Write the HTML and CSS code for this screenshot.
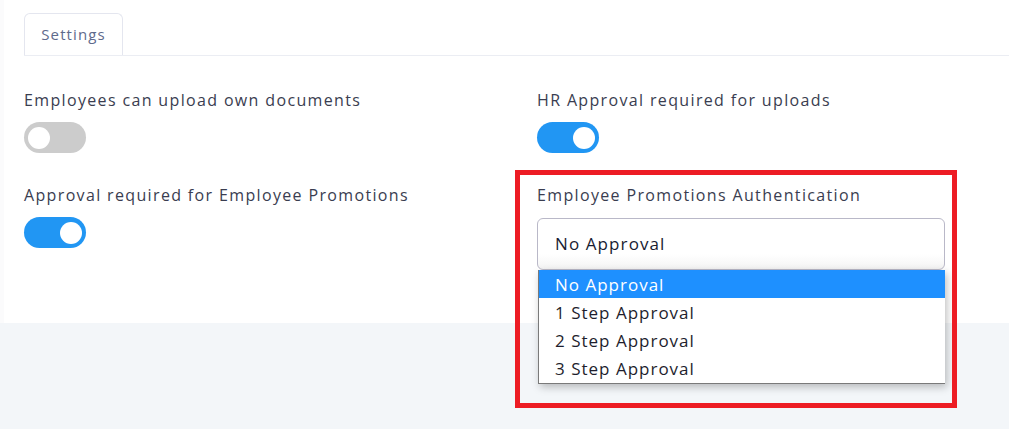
FILE: index.html
```html
<!DOCTYPE html>
<html>
<head>
<meta charset="utf-8">
<link rel="stylesheet" href="styles.css">
</head>
<body>
<div class="card">
  <div class="tabs">
    <div class="tab">Settings</div>
  </div>
  <div class="grid">
    <div class="field">
      <div class="label">Employees can upload own documents</div>
      <div class="toggle"><span class="knob"></span></div>
    </div>
    <div class="field">
      <div class="label">HR Approval required for uploads</div>
      <div class="toggle on"><span class="knob"></span></div>
    </div>
    <div class="field">
      <div class="label">Approval required for Employee Promotions</div>
      <div class="toggle on"><span class="knob"></span></div>
    </div>
    <div class="field auth">
      <div class="label">Employee Promotions Authentication</div>
      <div class="select-wrap">
        <div class="select">No Approval</div>
        <ul class="dropdown">
          <li class="opt active">No Approval</li>
          <li class="opt">1 Step Approval</li>
          <li class="opt">2 Step Approval</li>
          <li class="opt">3 Step Approval</li>
        </ul>
      </div>
      <div class="highlight"></div>
    </div>
  </div>
</div>
</body>
</html>
```

FILE: styles.css
```css
html, body {
  margin: 0;
  padding: 0;
}
body {
  background: #f3f6f9;
  font-family: "Open Sans", "Noto Sans", sans-serif;
  height: 429px;
  overflow: hidden;
}
.card {
  background: #fff;
  height: 323px;
  border-left: 4px solid #fbfbfc;
  box-sizing: border-box;
}
.tabs {
  margin-left: 20px;
  padding-top: 13px;
  border-bottom: 1px solid #ebedf3;
  display: flex;
}
.tab {
  width: 99px;
  height: 42px;
  box-sizing: border-box;
  border: 1px solid #e4e6ef;
  border-bottom: none;
  border-radius: 6px 6px 0 0;
  display: flex;
  align-items: center;
  justify-content: center;
  padding-bottom: 2px;
  font-size: 15px;
  letter-spacing: 1.1px;
  color: #5e6a8c;
}
.grid {
  display: grid;
  grid-template-columns: 513px 1fr;
  row-gap: 30px;
  padding: 32px 0 0 20px;
}
.field {
  display: flex;
  flex-direction: column;
  align-items: flex-start;
}
.label {
  font-size: 16px;
  line-height: 24px;
  color: #3a3d50;
  letter-spacing: 1.35px;
}
.toggle {
  margin-top: 10px;
  width: 62px;
  height: 31px;
  border-radius: 16px;
  background: #cccccc;
  display: flex;
  align-items: center;
  padding: 0 4px;
  box-sizing: border-box;
}
.toggle.on {
  background: #2196f3;
  justify-content: flex-end;
}
.knob {
  width: 22px;
  height: 22px;
  border-radius: 50%;
  background: #fff;
}
.auth {
  position: relative;
}
.select-wrap {
  position: relative;
  margin-top: 11px;
}
.select {
  width: 408px;
  height: 52px;
  box-sizing: border-box;
  border: 1px solid #b9b8c8;
  border-radius: 6px;
  background: linear-gradient(#ffffff 70%, #f4f4f4);
  padding-left: 17px;
  display: flex;
  align-items: center;
  padding-bottom: 2px;
  font-size: 17px;
  letter-spacing: 1.1px;
  color: #181c32;
}
.dropdown {
  position: absolute;
  left: 1px;
  top: 52px;
  width: 407px;
  margin: 0;
  padding: 0 0 1px 0;
  list-style: none;
  background: #fff;
  border-left: 1px solid #7a7a7a;
  border-bottom: 1px solid #7a7a7a;
  box-sizing: border-box;
  box-shadow: 2px 3px 8px rgba(0, 0, 0, 0.25);
}
.opt {
  height: 28px;
  line-height: 29px;
  padding-left: 16px;
  font-size: 17px;
  letter-spacing: 1px;
  color: #1e1e2d;
}
.opt.active {
  background: #1e90ff;
  color: #fff;
}
.highlight {
  position: absolute;
  left: -22px;
  top: -13px;
  width: 442px;
  height: 238px;
  box-sizing: border-box;
  border: 5px solid #ed1c24;
  pointer-events: none;
}
```
